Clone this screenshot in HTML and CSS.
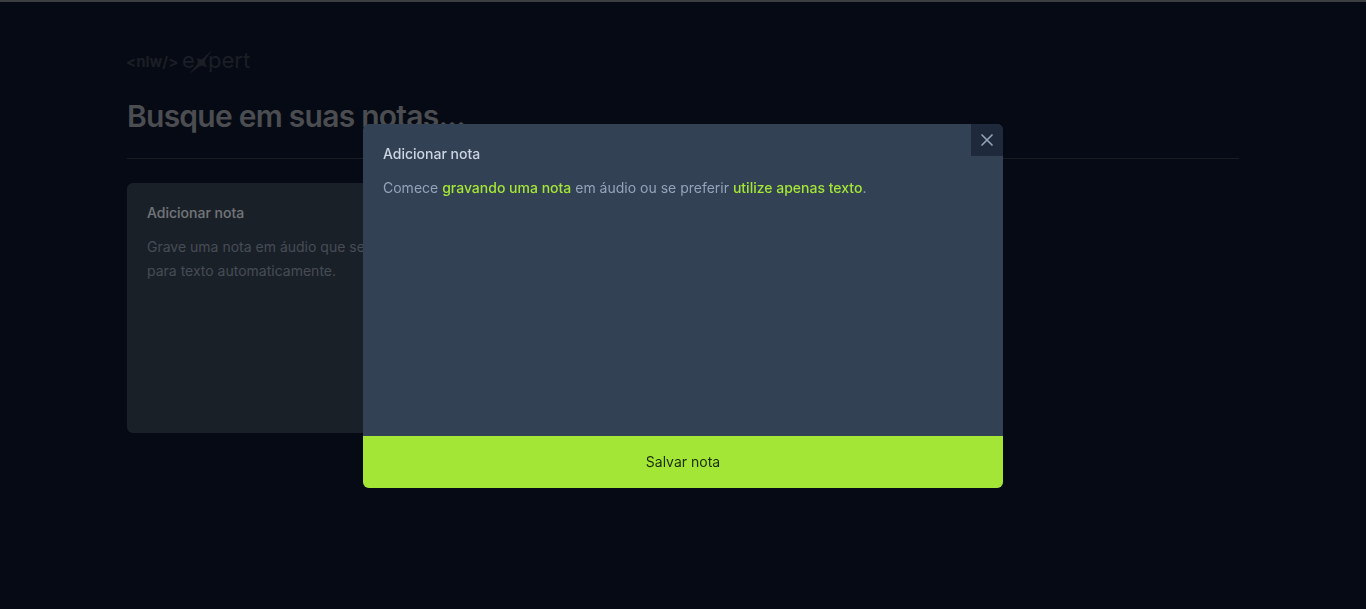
FILE: index.html
```html
<!DOCTYPE html>
<html lang="pt-BR">
<head>
<meta charset="utf-8">
<meta name="viewport" content="width=device-width, initial-scale=1">
<title>NLW Expert Notes</title>
<link rel="stylesheet" href="styles.css">
</head>
<body>
<main class="page">
  <svg class="logo" viewBox="0 0 126 24" role="img" aria-label="nlw expert">
    <text class="logo-mark" x="-1" y="17">&lt;nlw/&gt;</text>
    <text class="logo-word" x="55" y="18">e</text>
    <path class="logo-star" d="M85 0 78.500 9.500 C77.500 11.500 78 14 80 17.500 76.500 15.500 74 15.500 72.500 16.500 L62 24 70 14.500 C71.500 12.500 71 10.500 69 7.500 72 9.500 74.500 9.500 76 8.500 Z"/>
    <text class="logo-word" x="81" y="18">pert</text>
  </svg>
  <form class="search">
    <input class="search-input" type="text" aria-label="Busque em suas notas" placeholder="Busque em suas notas...">
  </form>
  <div class="divider"></div>
  <div class="notes">
    <button class="card" type="button">
      <span class="card-title">Adicionar nota</span>
      <span class="card-text">Grave uma nota em áudio que será convertida para texto automaticamente.</span>
    </button>
  </div>
</main>
<div class="overlay">
  <section class="dialog" role="dialog" aria-modal="true" aria-labelledby="dialog-title">
    <button class="close" type="button" aria-label="Fechar">
      <svg class="close-icon" viewBox="0 0 24 24"><path d="M18 6 6 18M6 6l12 12"/></svg>
    </button>
    <form class="dialog-form">
      <div class="dialog-body">
        <h2 class="dialog-title" id="dialog-title">Adicionar nota</h2>
        <p class="dialog-text">Comece <button class="link" type="button">gravando uma nota</button> em áudio ou se preferir <button class="link" type="button">utilize apenas texto</button>.</p>
      </div>
      <button class="save" type="button">Salvar nota</button>
    </form>
  </section>
</div>
</body>
</html>
```
FILE: styles.css
```css
* { box-sizing: border-box; }
body {
  margin: 0;
  min-height: 100vh;
  border-top: 2px solid #3d4040;
  background: #0b1528;
  color: #f8fafc;
  font-family: Inter, "Liberation Sans", sans-serif;
}
button, input { font: inherit; }
button {
  padding: 0;
  border: 0;
  cursor: pointer;
}
.page {
  display: flex;
  flex-direction: column;
  gap: 24px;
  max-width: 1152px;
  margin: 0 auto;
  padding: 48px 20px;
}
.logo {
  width: 126px;
  height: 24px;
  overflow: visible;
  fill: #363c4a;
}
.logo-mark { font: 700 15px Inter, sans-serif; }
.logo-word { font: 400 22px Inter, sans-serif; }
.search { display: flex; }
.search-input {
  width: 100%;
  height: 36px;
  padding: 0;
  border: 0;
  outline: none;
  background: transparent;
  color: inherit;
  font-size: 30px;
  font-weight: 600;
  line-height: 36px;
  letter-spacing: -0.025em;
}
.search-input::placeholder { color: #969aa2; opacity: 1; }
.divider {
  height: 1px;
  background: #343b48;
}
.notes {
  display: grid;
  grid-template-columns: repeat(3, 1fr);
  grid-auto-rows: 250px;
  gap: 24px;
}
.card {
  display: flex;
  flex-direction: column;
  gap: 12px;
  padding: 20px;
  border-radius: 6px;
  background: #344051;
  text-align: left;
  font-size: 14px;
}
.card-title {
  color: #e2e8f0;
  font-weight: 500;
  line-height: 20px;
}
.card-text {
  color: #8c98a8;
  line-height: 24px;
}
.overlay {
  position: fixed;
  inset: 2px 0 0;
  display: grid;
  place-items: center;
  background: rgba(0, 0, 0, 0.5);
}
.dialog {
  position: relative;
  width: 100%;
  max-width: 640px;
  overflow: hidden;
  border-radius: 6px;
  background: #334155;
  font-size: 14px;
}
.close {
  position: absolute;
  top: 0;
  right: 0;
  padding: 6px;
  background: #1e293b;
  color: #94a3b8;
}
.close-icon {
  display: block;
  width: 20px;
  height: 20px;
  fill: none;
  stroke: currentColor;
  stroke-width: 2;
  stroke-linecap: round;
}
.dialog-form {
  display: flex;
  flex-direction: column;
}
.dialog-body {
  display: flex;
  flex-direction: column;
  gap: 12px;
  min-height: 312px;
  padding: 20px;
}
.dialog-title {
  margin: 0;
  color: #cbd5e1;
  font-size: 14px;
  font-weight: 500;
  line-height: 20px;
}
.dialog-text {
  margin: 0;
  color: #94a3b8;
  line-height: 24px;
}
.link {
  background: transparent;
  color: #a3e635;
  font-weight: 500;
}
.save {
  padding: 16px 0;
  background: #a3e635;
  color: #1a2e05;
  line-height: 20px;
}
```
